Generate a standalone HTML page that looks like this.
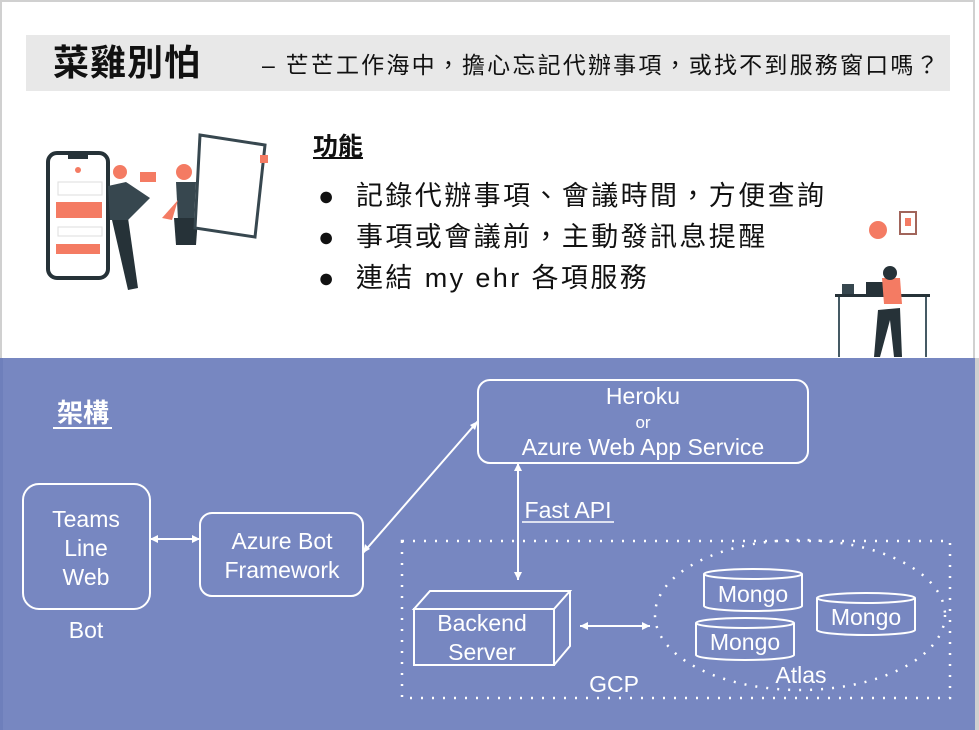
<!DOCTYPE html>
<html><head><meta charset="utf-8"><style>
body{margin:0;width:979px;height:730px;overflow:hidden;background:#fff;position:relative;font-family:"Liberation Sans","Noto Sans CJK TC",sans-serif}
.a{position:absolute;white-space:nowrap}
</style></head><body>
<div class="a" style="left:0;top:0;width:975px;height:358px;border-top:2px solid #d0d0d0;border-left:2px solid #d0d0d0;border-right:2px solid #d0d0d0;box-sizing:border-box"></div>
<div class="a" style="left:26px;top:35px;width:924px;height:56px;background:#e8e8e8"></div>
<div class="a" style="left:53px;top:40px;font-size:36px;font-weight:bold;line-height:46px;letter-spacing:1px;color:#111">菜雞別怕</div>
<div class="a" style="left:262px;top:50px;font-size:23px;line-height:30px;letter-spacing:2.2px;color:#111">– 芒芒工作海中，擔心忘記代辦事項，或找不到服務窗口嗎？</div>
<div class="a" style="left:313px;top:130px;font-size:25px;font-weight:bold;line-height:34px;text-decoration:underline;color:#111">功能</div>
<div class="a" style="left:318px;top:176px;font-size:27px;line-height:41px;color:#111">●<br>●<br>●</div>
<div class="a" style="left:356px;top:176px;font-size:27px;line-height:41px;letter-spacing:2.4px;color:#111">記錄代辦事項、會議時間，方便查詢<br>事項或會議前，主動發訊息提醒<br>連結 my ehr 各項服務</div>
<svg class="a" style="left:0;top:120px" width="300" height="180">
<rect x="48" y="33" width="60" height="125" rx="9" fill="#fff" stroke="#263238" stroke-width="4"/>
<rect x="68" y="33" width="20" height="6" fill="#263238"/>
<rect x="58" y="62" width="44" height="13" fill="#fff" stroke="#ddd"/>
<rect x="56" y="82" width="46" height="16" fill="#f47b63"/>
<rect x="58" y="107" width="44" height="9" fill="#fff" stroke="#ddd"/>
<rect x="56" y="124" width="44" height="10" fill="#f47b63"/>
<circle cx="78" cy="50" r="3" fill="#f47b63"/>
<path d="M112 100 L128 98 L138 168 L128 170 Z" fill="#263238"/>
<circle cx="120" cy="52" r="7" fill="#f47b63"/>
<path d="M108 66 L126 62 L150 78 L128 100 L110 100 Z" fill="#37474f"/>
<rect x="140" y="52" width="16" height="10" fill="#f47b63"/>
<path d="M176 62 L196 62 L194 100 L178 100 Z" fill="#37474f"/>
<path d="M174 98 L198 98 L196 125 L176 125 Z" fill="#263238"/>
<circle cx="184" cy="52" r="8" fill="#f47b63"/>
<path d="M162 98 L178 80 L172 100 Z" fill="#f47b63"/>
<path d="M200 15 L265 25 L255 117 L195 108 Z" fill="#fff" stroke="#37474f" stroke-width="3"/>
<rect x="260" y="35" width="8" height="8" fill="#f47b63"/>
</svg>
<svg class="a" style="left:830px;top:200px" width="140" height="158">
<circle cx="48" cy="30" r="9" fill="#f47b63"/>
<rect x="70" y="12" width="16" height="22" fill="#fff" stroke="#a1655b" stroke-width="2"/>
<rect x="75" y="18" width="6" height="8" fill="#f47b63"/>
<rect x="5" y="94" width="95" height="3" fill="#263238"/>
<rect x="8" y="97" width="2" height="60" fill="#455a64"/><rect x="95" y="97" width="2" height="60" fill="#455a64"/>
<rect x="36" y="82" width="18" height="12" fill="#263238"/>
<path d="M52 78 L70 78 L72 104 L54 104 Z" fill="#f47b63"/>
<circle cx="60" cy="73" r="7" fill="#263238"/>
<path d="M48 110 L70 108 L72 157 L64 157 L60 120 L50 157 L44 157 Z" fill="#263238"/>
<rect x="12" y="84" width="12" height="10" fill="#37474f"/>
</svg>
<svg class="a" style="left:0;top:358px" width="979" height="372" font-family="Liberation Sans, sans-serif" fill="none">
<rect x="0" y="0" width="979" height="372" fill="#7787c1"/>
<rect x="0" y="0" width="3" height="372" fill="#6e7fbb"/>
<rect x="975" y="0" width="4" height="372" fill="#d0d0d0"/>
<g stroke="#fff" stroke-width="2">
<rect x="23" y="126" width="127" height="125" rx="16"/>
<rect x="200" y="155" width="163" height="83" rx="12"/>
<rect x="478" y="22" width="330" height="83" rx="12"/>
<path d="M150 181 H200 M363 195 L478 63 M518 105 V222"/>
<path d="M414 251 L430 233 H570 L554 251 Z M554 251 V307 M570 233 V288 L554 307"/>
<rect x="414" y="251" width="140" height="56"/>
<path d="M580 268 H650"/>
<path d="M522 164 H614" stroke-width="1.5"/>
<line x1="53" y1="70" x2="112" y2="70"/>
</g>
<g fill="#fff">
<path d="M150 181 l8 -4 v8 z M200 181 l-8 -4 v8 z M363 195 l2 -9 l5 5 z M478 63 l-8 4 l5 5 z M518 105 l-4 8 h8 z M518 222 l-4 -8 h8 z M580 268 l8 -4 v8 z M650 268 l-8 -4 v8 z"/>
</g>
<rect x="402" y="183" width="548" height="157" stroke="#fff" stroke-width="2.5" stroke-dasharray="2 9"/>
<ellipse cx="800" cy="257" rx="145" ry="75" stroke="#fff" stroke-width="2.5" stroke-dasharray="2 9"/>
<g stroke="#fff" stroke-width="2">
<path d="M704 216 v32 a49 5 0 0 0 98 0 v-32"/><ellipse cx="753" cy="216" rx="49" ry="5"/>
<path d="M817 240 v32 a49 5 0 0 0 98 0 v-32"/><ellipse cx="866" cy="240" rx="49" ry="5"/>
<path d="M696 265 v32 a49 5 0 0 0 98 0 v-32"/><ellipse cx="745" cy="265" rx="49" ry="5"/>
</g>
<g fill="#fff" font-size="23" text-anchor="middle">
<text x="86" y="169">Teams</text><text x="86" y="198">Line</text><text x="86" y="227">Web</text>
<text x="86" y="280">Bot</text>
<text x="282" y="191">Azure Bot</text><text x="282" y="220">Framework</text>
<text x="643" y="46">Heroku</text><text x="643" y="70" font-size="17">or</text><text x="643" y="97">Azure Web App Service</text>
<text x="568" y="160">Fast API</text>
<text x="482" y="273">Backend</text><text x="482" y="302">Server</text>
<text x="614" y="334">GCP</text><text x="801" y="325">Atlas</text>
<text x="753" y="244">Mongo</text><text x="866" y="267">Mongo</text><text x="745" y="292">Mongo</text>
<text x="83" y="64" font-size="26" font-weight="bold" font-family="Liberation Sans, Noto Sans CJK TC, sans-serif">架構</text>
</g>
</svg>
</body></html>
